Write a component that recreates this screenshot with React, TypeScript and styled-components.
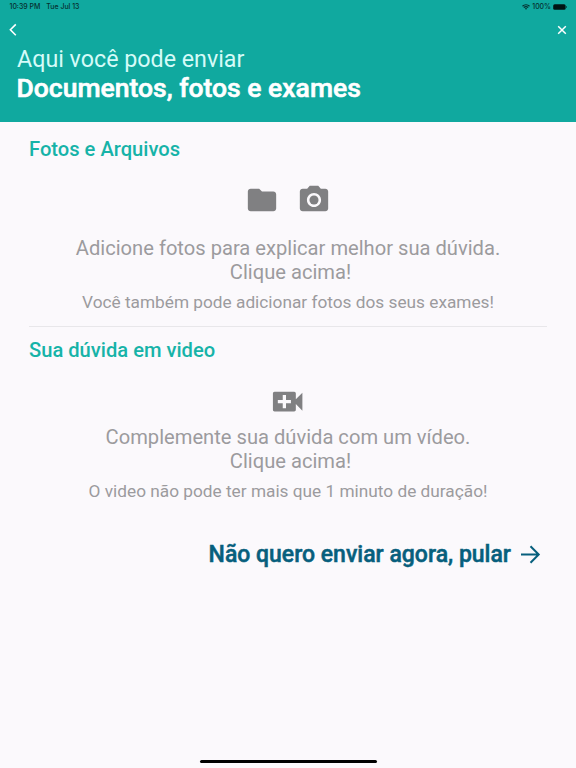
import React from 'react';
import styled, { createGlobalStyle } from 'styled-components';

const GlobalStyle = createGlobalStyle`
  *, *::before, *::after { box-sizing: border-box; }
  body { margin: 0; background: #fbf9fc; font-family: Roboto, sans-serif; }
`;

const Screen = styled.div`
  display: flex;
  flex-direction: column;
  width: 100%;
  height: 100vh;
  min-height: 768px;
  background: #fbf9fc;
`;

const Header = styled.header`
  display: flex;
  flex-direction: column;
  height: 122px;
  background: #10a99f;
  color: #fff;
`;

const StatusBar = styled.div`
  display: flex;
  justify-content: space-between;
  height: 14px;
  padding: 0 8.5px 0 9.5px;
  color: #06302f;
  font: 500 6.95px/14px Inter, sans-serif;
`;

const StatusGroup = styled.div<{ $gap: number }>`
  display: flex;
  align-items: center;
  gap: ${({ $gap }) => $gap}px;
  white-space: nowrap;
`;

const NavBar = styled.nav`
  display: flex;
  align-items: center;
  justify-content: space-between;
  height: 31px;
  padding: 0 9px 0 8px;
`;

const IconButton = styled.button`
  display: flex;
  padding: 0;
  border: 0;
  background: none;
  color: inherit;
  cursor: pointer;
`;

const Intro = styled.p`
  margin: 0;
  padding-left: 17px;
  color: #d5fbf8;
  font-size: 23.25px;
  line-height: 28px;
`;

const Title = styled.h1`
  margin: 0;
  padding-left: 16.5px;
  font-size: 26.5px;
  font-weight: 500;
  line-height: 30px;
  -webkit-text-stroke: 0.6px currentColor;
`;

const Content = styled.main`
  display: flex;
  flex-direction: column;
  padding: 15px 29px 0;
`;

const Section = styled.section`
  display: flex;
  flex-direction: column;
  align-items: center;
  text-align: center;
`;

const SectionTitle = styled.h2`
  align-self: flex-start;
  margin: 0;
  color: #16b3a8;
  font-size: 20.15px;
  font-weight: 500;
  line-height: 24px;
`;

const Actions = styled.div<{ $top: number; $height: number }>`
  display: flex;
  gap: 17.3px;
  height: ${({ $height }) => $height}px;
  margin-top: ${({ $top }) => $top}px;
  color: #808082;
`;

const Prompt = styled.p`
  margin: 0;
  color: #9c9b9e;
  font-size: 20.15px;
  line-height: 23.5px;
`;

const PromptAction = styled.span`
  display: block;
  padding-left: 5px;
`;

const Hint = styled.p`
  margin: 8px 0 0;
  color: #9c9b9e;
  font-size: 17.25px;
  line-height: 20px;
`;

const Divider = styled.hr`
  width: 100%;
  height: 1px;
  margin: 14px 0 11px;
  border: 0;
  background: #e8e7ea;
`;

const SkipButton = styled.button`
  display: flex;
  align-self: flex-end;
  align-items: center;
  gap: 9px;
  margin: 40px 6px 0 0;
  padding: 0;
  border: 0;
  background: none;
  color: #075f7d;
  font: 500 23px/28px Roboto, sans-serif;
  cursor: pointer;
`;

const SkipLabel = styled.span`
  -webkit-text-stroke: 0.5px currentColor;
`;

const HomeArea = styled.footer`
  display: flex;
  justify-content: center;
  margin-top: auto;
  padding-bottom: 5px;
`;

const HomeIndicator = styled.div`
  width: 177px;
  height: 3px;
  border-radius: 2px;
  background: #000;
`;

const BackIcon = () => (
  <svg width="10" height="14" viewBox="0 0 10 14" fill="none" stroke="currentColor" strokeWidth="1.6">
    <path d="M7.8 1.4 2.4 6.8l5.4 5.4" />
  </svg>
);

const CloseIcon = () => (
  <svg width="10" height="10" viewBox="0 0 10 10" fill="none" stroke="currentColor" strokeWidth="1.5">
    <path d="m1.2 1.2 7.6 7.6M8.8 1.2 1.2 8.8" />
  </svg>
);

const WifiIcon = () => (
  <svg width="8" height="6" viewBox="0 0 16 12" fill="none" stroke="currentColor" strokeWidth="2.6">
    <path d="M1 4.6a10 10 0 0 1 14 0M3.7 7.3a6.2 6.2 0 0 1 8.6 0" />
    <path d="M8 11.5 5.7 9.1a3.3 3.3 0 0 1 4.6 0Z" fill="currentColor" stroke="none" />
  </svg>
);

const BatteryIcon = () => (
  <svg width="14.5" height="6" viewBox="0 0 14.5 6">
    <rect x=".2" y=".2" width="12.4" height="5.6" rx="1.5" fill="#001514" />
    <path d="M13.2 2v2c.5-.1.8-.5.8-1s-.3-.9-.8-1Z" fill="currentColor" />
  </svg>
);

const FolderIcon = () => (
  <svg width="34" height="34" viewBox="0 0 24 24" fill="currentColor">
    <path d="M10 4H4c-1.1 0-2 .9-2 2v12c0 1.1.9 2 2 2h16c1.1 0 2-.9 2-2V8c0-1.1-.9-2-2-2h-8l-2-2Z" />
  </svg>
);

const CameraIcon = () => (
  <svg width="34" height="34" viewBox="0 0 24 24" fill="currentColor">
    <circle cx="12" cy="12" r="3.2" />
    <path d="M9 2 7.17 4H4c-1.1 0-2 .9-2 2v12c0 1.1.9 2 2 2h16c1.1 0 2-.9 2-2V6c0-1.1-.9-2-2-2h-3.17L15 2H9Zm3 15c-2.76 0-5-2.24-5-5s2.24-5 5-5 5 2.24 5 5-2.24 5-5 5Z" />
  </svg>
);

const VideoAddIcon = () => (
  <svg width="39.3" height="39.3" viewBox="0 0 24 24" fill="currentColor">
    <path d="M17 10.5V7c0-.55-.45-1-1-1H4c-.55 0-1 .45-1 1v10c0 .55.45 1 1 1h12c.55 0 1-.45 1-1v-3.5l4 4v-11l-4 4ZM14 13h-3v3H9v-3H6v-2h3V8h2v3h3v2Z" />
  </svg>
);

const ArrowIcon = () => (
  <svg width="21" height="20" viewBox="0 0 21 20" fill="none" stroke="currentColor" strokeWidth="2">
    <path d="M1 9.5h17.5M10.5 1.3l8.2 8.2-8.2 8.2" />
  </svg>
);

export default function App() {
  return (
    <Screen>
      <GlobalStyle />
      <Header>
        <StatusBar>
          <StatusGroup $gap={6}>
            <span>10:39 PM</span>
            <span>Tue Jul 13</span>
          </StatusGroup>
          <StatusGroup $gap={2}>
            <WifiIcon />
            <span>100%</span>
            <BatteryIcon />
          </StatusGroup>
        </StatusBar>
        <NavBar>
          <IconButton aria-label="Voltar"><BackIcon /></IconButton>
          <IconButton aria-label="Fechar"><CloseIcon /></IconButton>
        </NavBar>
        <Intro>Aqui você pode enviar</Intro>
        <Title>Documentos, fotos e exames</Title>
      </Header>
      <Content>
        <Section>
          <SectionTitle>Fotos e Arquivos</SectionTitle>
          <Actions $top={22} $height={54}>
            <IconButton aria-label="Pasta"><FolderIcon /></IconButton>
            <IconButton aria-label="Câmera"><CameraIcon /></IconButton>
          </Actions>
          <Prompt>
            Adicione fotos para explicar melhor sua dúvida.
            <PromptAction>Clique acima!</PromptAction>
          </Prompt>
          <Hint>Você também pode adicionar fotos dos seus exames!</Hint>
        </Section>
        <Divider />
        <Section>
          <SectionTitle>Sua dúvida em video</SectionTitle>
          <Actions $top={20} $height={44}>
            <IconButton aria-label="Adicionar vídeo"><VideoAddIcon /></IconButton>
          </Actions>
          <Prompt>
            Complemente sua dúvida com um vídeo.
            <PromptAction>Clique acima!</PromptAction>
          </Prompt>
          <Hint>O video não pode ter mais que 1 minuto de duração!</Hint>
        </Section>
        <SkipButton>
          <SkipLabel>Não quero enviar agora, pular</SkipLabel>
          <ArrowIcon />
        </SkipButton>
      </Content>
      <HomeArea><HomeIndicator /></HomeArea>
    </Screen>
  );
}
